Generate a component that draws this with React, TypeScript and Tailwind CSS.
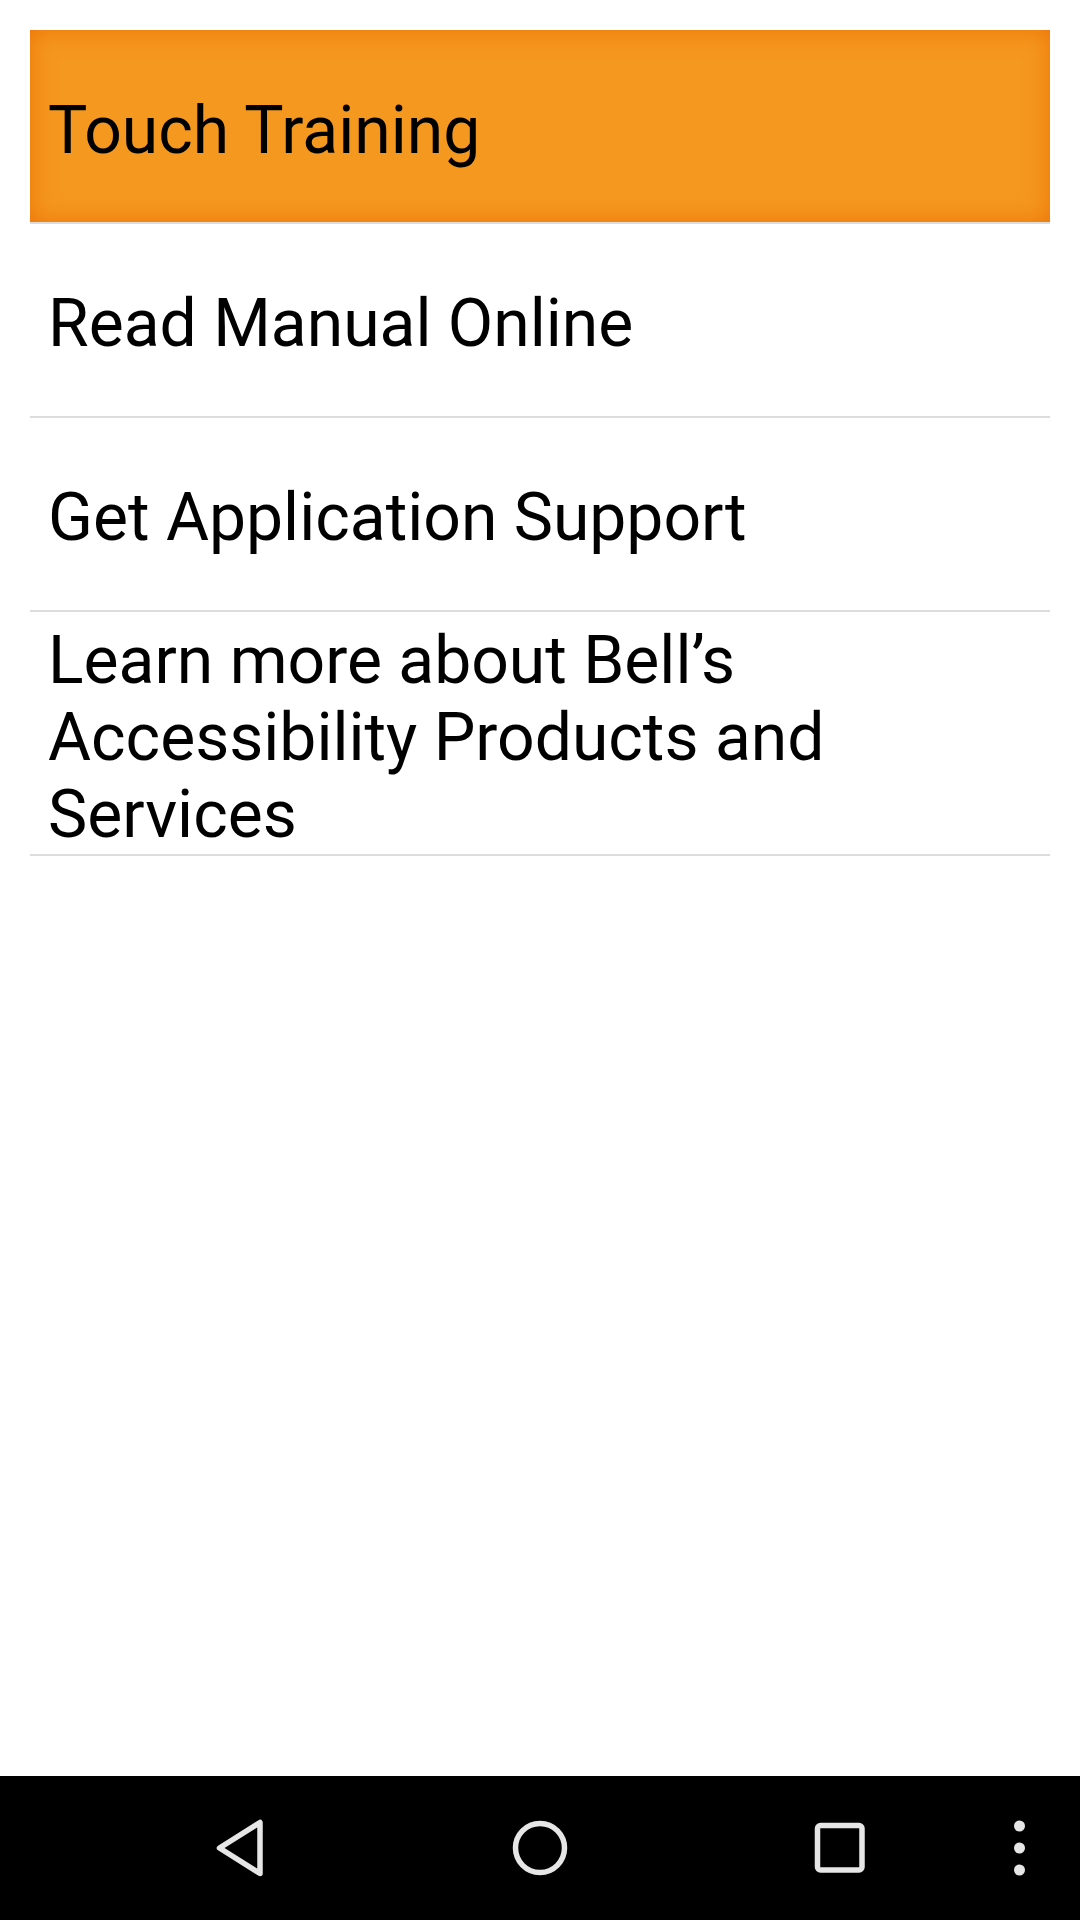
import React from "react";

const items = [
  "Read Manual Online",
  "Get Application Support",
];

const NavBar: React.FC = () => (
  <div className="h-[144px] bg-black flex items-center shrink-0">
    <svg width="1080" height="144" viewBox="0 0 1080 144" className="block">
      <g fill="none" stroke="#e6e6e6" strokeWidth="5.5" strokeLinejoin="round">
        <path d="M219.5 72 L260 46.5 L260 97.5 Z" />
        <circle cx="540" cy="72" r="24.5" />
        <rect x="817.5" y="49.5" width="44.5" height="44.5" rx="3" />
      </g>
      <g fill="#e6e6e6">
        <circle cx="1019.5" cy="50" r="5.5" />
        <circle cx="1019.5" cy="72" r="5.5" />
        <circle cx="1019.5" cy="94" r="5.5" />
      </g>
    </svg>
  </div>
);

export default function App() {
  return (
    <div
      className="w-[1080px] h-[1920px] bg-white flex flex-col text-black"
      style={{ fontFamily: "Roboto, 'Noto Sans', sans-serif" }}
    >
      <div className="flex-1 pt-[30px] px-[30px]">
        <div className="h-[194px] border-b-2 border-[#dcdcdc]">
          <div className="h-[192px] bg-[#f5981f] shadow-[inset_0_0_24px_rgba(235,110,5,0.85)] flex items-center pl-[18px] pt-[8px]">
            <span className="text-[66px] leading-[77px]">Touch Training</span>
          </div>
        </div>
        {items.map((label) => (
          <div
            key={label}
            className="h-[194px] border-b-2 border-[#dcdcdc] flex items-center pl-[18px] pt-[6px]"
          >
            <span className="text-[66px] leading-[77px]">{label}</span>
          </div>
        ))}
        <div className="h-[244px] border-b-2 border-[#dcdcdc] pl-[18px] pr-[20px] pt-[10px]">
          <p className="text-[66px] leading-[77px]">
            Learn more about Bell’s Accessibility Products and Services
          </p>
        </div>
      </div>
      <NavBar />
    </div>
  );
}
